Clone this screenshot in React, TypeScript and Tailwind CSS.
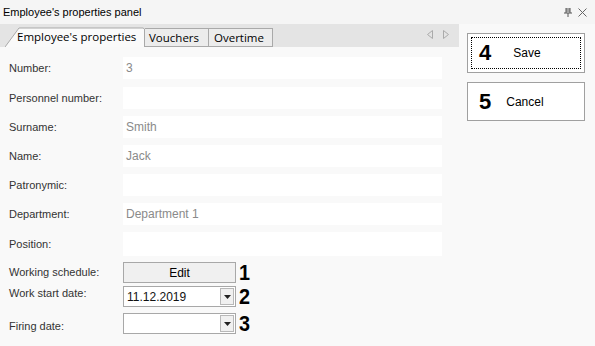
import React from "react";

const font = { fontFamily: '"Liberation Sans", Arial, sans-serif' };
const tabFont = { fontFamily: '"Open Sans", "DejaVu Sans", sans-serif' };

function Label({ children }: { children: React.ReactNode }) {
  return <div className="w-[114px] shrink-0 text-[11px] text-[#333]">{children}</div>;
}

function Field({ label, value, h = 22, mt = 0 }: { label: string; value?: string; h?: number; mt?: number }) {
  return (
    <div className="flex items-center" style={{ height: h, marginTop: mt }}>
      <div className="w-[114px] shrink-0 text-[11px] text-[#333]">{label}</div>
      <div className="h-full w-[319px] bg-white flex items-center pl-[3px] text-[12px] text-[#8a8a8a]">
        {value}
      </div>
    </div>
  );
}

function Combo({ value }: { value?: string }) {
  return (
    <div className="h-[21px] w-[113px] border border-[#a8a8a8] bg-white flex items-center justify-between">
      <span className="pl-[3px] text-[12px] text-[#111]">{value}</span>
      <div className="mr-[1px] h-[17px] w-[14px] border border-[#b8b8b8] bg-[#f0f0f0] flex items-center justify-center">
        <svg width="7" height="4" viewBox="0 0 7 4">
          <path d="M0 0h7L3.5 4z" fill="#222" />
        </svg>
      </div>
    </div>
  );
}

function Num({ n }: { n: string }) {
  return (
    <span className="ml-[3px] text-[22px] font-bold leading-none text-black inline-block scale-x-[0.9] origin-left">
      {n}
    </span>
  );
}

export default function App() {
  return (
    <div className="w-[595px] h-[346px] bg-[#f9f9f9] overflow-hidden relative" style={font}>
      {/* title bar */}
      <div className="h-[24px] bg-[#f5f5f5] flex items-center justify-between pl-[3px] pr-[8px]">
        <span className="text-[11px] text-black">Employee's properties panel</span>
        <div className="flex items-center gap-[6px] text-[#555]">
          <svg width="8" height="9" viewBox="0 0 8 9">
            <path d="M2 0v5M6 0v5M2 1h4M0 5h8M4 5v4M2 3h4" stroke="#555" strokeWidth="1" fill="none" />
          </svg>
          <svg width="9" height="9" viewBox="0 0 9 9">
            <path d="M0.5 0.5l8 8M8.5 0.5l-8 8" stroke="#666" strokeWidth="1" />
          </svg>
        </div>
      </div>
      <div className="flex">
        {/* left */}
        <div className="w-[459px] shrink-0">
          {/* tab strip */}
          <div className="h-[23px] bg-[#e4e4e4] relative flex items-end">
            <div className="relative ml-[5px] h-[20px] w-[140px]">
              <svg className="absolute inset-0" width="140" height="20" viewBox="0 0 140 20">
                <path d="M0 20 L14 1 L138 1 L139.5 2 L139.5 20" fill="#fafafa" stroke="#a9a9a9" />
              </svg>
              <span className="absolute left-[12px] top-[1px] whitespace-nowrap text-[11.5px] leading-[18px] text-black" style={tabFont}>
                Employee's properties
              </span>
            </div>
            <div className="h-[19px] w-[64px] border border-[#a9a9a9] border-l-0 bg-[#ececec] flex items-center pl-[4px] whitespace-nowrap text-[11.5px] text-black" style={tabFont}>
              Vouchers
            </div>
            <div className="h-[19px] w-[64px] border border-[#a9a9a9] border-l-0 bg-[#ececec] flex items-center pl-[5px] whitespace-nowrap text-[11.5px] text-black" style={tabFont}>
              Overtime
            </div>
            <div className="absolute right-[10px] top-[6px] flex gap-[10px]">
              <svg width="6" height="9" viewBox="0 0 6 9">
                <path d="M5.5 0.5v8L0.5 4.5z" fill="none" stroke="#aaa" />
              </svg>
              <svg width="6" height="9" viewBox="0 0 6 9">
                <path d="M0.5 0.5v8L5.5 4.5z" fill="none" stroke="#aaa" />
              </svg>
            </div>
          </div>
          {/* form */}
          <div className="pl-[9px] pt-[10px] flex flex-col">
            <Field label="Number:" value="3" />
            <Field label="Personnel number:" mt={8} />
            <Field label="Surname:" value="Smith" mt={7} />
            <Field label="Name:" value="Jack" mt={7} />
            <Field label="Patronymic:" mt={7} />
            <Field label="Department:" value="Department 1" mt={7} />
            <Field label="Position:" mt={7} h={24} />
            <div className="flex items-center h-[21px] mt-[6px]">
              <Label>Working schedule:</Label>
              <div className="h-[21px] w-[113px] border border-[#a8a8a8] bg-[#f0f0f0] flex items-center justify-center text-[12px] text-black">
                Edit
              </div>
              <Num n="1" />
            </div>
            <div className="flex items-center h-[21px] mt-[3px]">
              <div className="w-[114px] shrink-0 text-[11px] text-[#333] -mt-[6px]">Work start date:</div>
              <Combo value="11.12.2019" />
              <Num n="2" />
            </div>
            <div className="flex items-center h-[21px] mt-[6px]">
              <div className="w-[114px] shrink-0 text-[11px] text-[#333] mt-[6px]">Firing date:</div>
              <Combo />
              <Num n="3" />
            </div>
          </div>
        </div>
        {/* right */}
        <div className="ml-[8px] pt-[9px] flex flex-col gap-[9px]">
          <div className="h-[40px] w-[118px] border border-[#a0a0a0] bg-white p-[3px]">
            <div className="h-full w-full border border-dotted border-black flex items-center">
              <span className="ml-[7px] text-[22px] font-bold leading-none text-black">4</span>
              <span className="ml-[22px] text-[12px] text-black">Save</span>
            </div>
          </div>
          <div className="h-[39px] w-[118px] border border-[#a0a0a0] bg-white flex items-center">
            <span className="ml-[11px] text-[22px] font-bold leading-none text-black">5</span>
            <span className="ml-[15px] text-[12px] text-black">Cancel</span>
          </div>
        </div>
      </div>
    </div>
  );
}
